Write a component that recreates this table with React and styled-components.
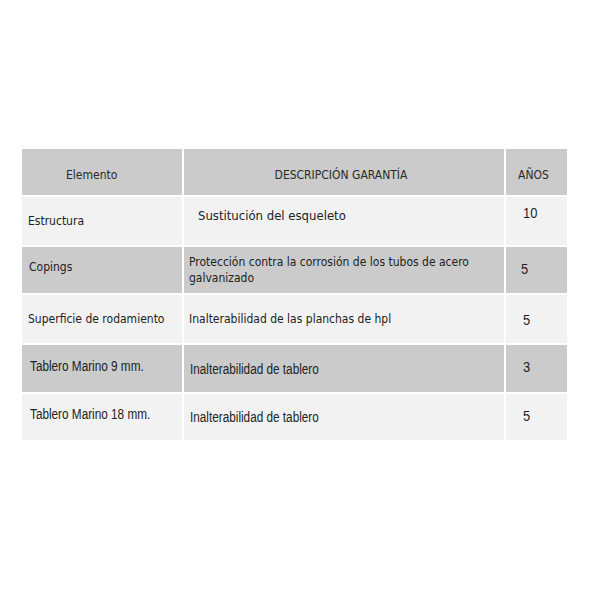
import { createGlobalStyle, styled } from "styled-components"

const GlobalStyle = createGlobalStyle`
    html, body{
        margin: 0;
        padding: 0;
        background-color: #ffffff;
    }
    body{
        font-family: "DejaVu Sans Condensed", "DejaVu Sans", sans-serif;
        color: #222222;
    }
`

const filas = [
    { elemento: "Estructura", desc: "Sustitución del esqueleto", anos: "10", tono: "light", h: 48, grande: true, e: 6, d: 14, a: 17, dy: -5, ay: -9 },
    { elemento: "Copings", desc: "Protección contra la corrosión de los tubos de acero galvanizado", anos: "5", tono: "dark", h: 46, e: 7, d: 5, a: 15, dy: 0, ay: -2, ey: -3 },
    { elemento: "Superficie de rodamiento", desc: "Inalterabilidad de las planchas de hpl", anos: "5", tono: "light", h: 48, e: 6, d: 5, a: 17, dy: 0, ay: 0 },
    { elemento: "Tablero Marino 9 mm.", desc: "Inalterabilidad de tablero", anos: "3", tono: "dark", h: 47, e: 8, d: 6, a: 17, dy: 0, ay: -2, ey: -3, estrecha: true },
    { elemento: "Tablero Marino 18 mm.", desc: "Inalterabilidad de tablero", anos: "5", tono: "light", h: 46, e: 8, d: 6, a: 17, dy: 0, ay: -2, ey: -3, estrecha: true },
]

export default function App(){
    return(
        <>
            <GlobalStyle />
            <Pagina>
                <Tabla>
                    <Fila $tono="head" $h={46}>
                        <Celda $pl={44} $dy={3}><Cabecera>Elemento</Cabecera></Celda>
                        <Celda $centro $dy={3}><Cabecera>DESCRIPCIÓN GARANTÍA</Cabecera></Celda>
                        <Celda $centro $dy={3}><Cabecera>AÑOS</Cabecera></Celda>
                    </Fila>
                    {filas.map((f) => (
                        <Fila key={f.elemento} $tono={f.tono} $h={f.h}>
                            <Celda $pl={f.e} $dy={f.ey || 0}>
                                <Texto $estrecha={f.estrecha}>{f.elemento}</Texto>
                            </Celda>
                            <Celda $pl={f.d} $dy={f.dy}>
                                <Texto $grande={f.grande} $estrecha={f.estrecha}>{f.desc}</Texto>
                            </Celda>
                            <Celda $pl={f.a} $dy={f.ay}><Numero>{f.anos}</Numero></Celda>
                        </Fila>
                    ))}
                </Tabla>
            </Pagina>
        </>
    )
}

const Pagina = styled.div`
    width: 589px;
    height: 589px;
    padding: 149px 0 0 22px;
    box-sizing: border-box;
`

const Tabla = styled.div`
    display: flex;
    flex-direction: column;
    gap: 2px;
    width: 545px;
`

const Fila = styled.div`
    display: grid;
    grid-template-columns: 160px 320px 61px;
    column-gap: 2px;
    height: ${(p) => p.$h}px;
    > div{
        background-color: ${(p) => (p.$tono === "light" ? "#f2f2f2" : "#cbcbcb")};
    }
`

const Celda = styled.div`
    display: flex;
    align-items: center;
    justify-content: ${(p) => (p.$centro ? "center" : "flex-start")};
    padding-left: ${(p) => p.$pl || 0}px;
    padding-right: 6px;
    padding-top: ${(p) => (p.$dy > 0 ? p.$dy * 2 : 0)}px;
    padding-bottom: ${(p) => (p.$dy < 0 ? -p.$dy * 2 : 0)}px;
    box-sizing: border-box;
    white-space: ${(p) => (p.$centro ? "nowrap" : "normal")};
`

const Cabecera = styled.span`
    font-size: 12px;
    color: #2a2a2a;
`

const Texto = styled.span`
    display: inline-block;
    font-family: ${(p) => (p.$estrecha
        ? `"Liberation Sans", Arial, sans-serif`
        : `"DejaVu Sans Condensed", "DejaVu Sans", sans-serif`)};
    font-size: ${(p) => (p.$estrecha ? "14px" : p.$grande ? "13px" : "12px")};
    transform: ${(p) => (p.$estrecha ? "scaleX(0.84)" : "none")};
    transform-origin: left center;
    white-space: ${(p) => (p.$estrecha ? "nowrap" : "normal")};
    line-height: 16px;
    color: #222222;
`

const Numero = styled.span`
    display: inline-block;
    font-family: "Liberation Sans", Arial, sans-serif;
    font-size: 15px;
    transform: scaleX(0.86);
    transform-origin: left center;
    color: #222222;
`
